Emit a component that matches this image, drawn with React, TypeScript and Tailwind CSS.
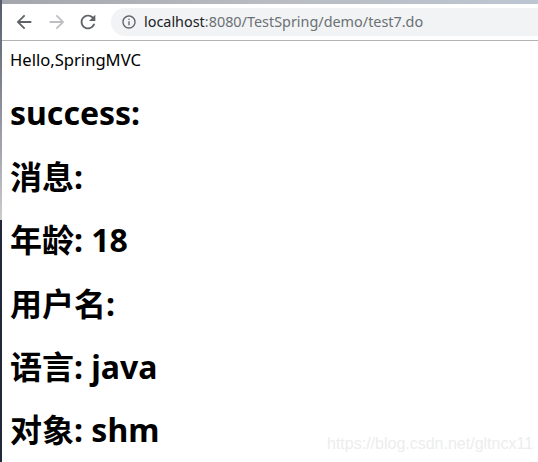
import React from "react";

const fields = ["success:", "消息:", "年龄: 18", "用户名:", "语言: java", "对象: shm"];

// Chrome toolbar glyphs
const Icon = ({ d, size, className }: { d: string; size: number; className: string }) => (
  <svg width={size} height={size} viewBox="0 0 24 24" fill="currentColor" className={className}>
    <path d={d} />
  </svg>
);

const BACK = "M20 11H7.83l5.59-5.59L12 4l-8 8 8 8 1.41-1.41L7.83 13H20v-2z";
const FORWARD = "M4 11h12.17l-5.59-5.59L12 4l8 8-8 8-1.41-1.41L16.17 13H4v-2z";
const RELOAD =
  "M17.65 6.35C16.2 4.9 14.21 4 12 4c-4.42 0-7.99 3.58-7.99 8s3.57 8 7.99 8c3.73 0 6.84-2.55 7.73-6h-2.08c-.82 2.33-3.04 4-5.65 4-3.31 0-6-2.69-6-6s2.69-6 6-6c1.66 0 3.14.69 4.22 1.78L13 11h7V4l-2.35 2.35z";
const INFO =
  "M11 7h2v2h-2zm0 4h2v6h-2zm1-9C6.48 2 2 6.48 2 12s4.48 10 10 10 10-4.48 10-10S17.52 2 12 2zm0 18c-4.41 0-8-3.59-8-8s3.59-8 8-8 8 3.59 8 8-3.59 8-8 8z";

const App = () => {
  return (
    <div className="relative flex h-[462px] w-[538px] overflow-hidden bg-white font-['Noto_Sans','Noto_Sans_CJK_SC',sans-serif] text-black">
      {/* sliver of the desktop behind the window */}
      <div className="flex w-[2px] shrink-0 flex-col">
        <div className="h-[220px] bg-gradient-to-b from-[#565c6c] to-[#cbcbcf]" />
        <div className="flex-1 bg-[#20283a]" />
      </div>
      <div className="min-w-0 flex-1">
        <div className="h-1 bg-gradient-to-r from-[#a3a6ad] via-[#b9bcc2] to-[#bcc6d2]" />
        <div className="flex h-[37px] items-center border-b border-[#b3b3b3]">
          <div className="flex items-center pl-[11px]">
            <Icon d={BACK} size={22} className="text-[#5f6368]" />
            <Icon d={FORWARD} size={22} className="ml-[11px] text-[#bdbfc2]" />
            <Icon d={RELOAD} size={22} className="ml-[9px] text-[#5f6368]" />
          </div>
          <div className="ml-[12px] flex h-[28px] flex-1 items-center rounded-l-full bg-[#f1f3f4] pl-[10px] text-[14.4px]">
            <Icon d={INFO} size={16} className="text-[#5f6368]" />
            <span className="ml-[7px] text-[#202124]">localhost</span>
            <span className="text-[#6b7075]">:8080/TestSpring/demo/test7.do</span>
          </div>
        </div>
        <div className="px-[8px]">
          <p className="mt-[8px] text-[16.6px] leading-[22px]">Hello,SpringMVC</p>
          {fields.map((f) => (
            <h1 key={f} className="mt-[20.4px] text-[32px] font-bold leading-[43px]">
              {f}
            </h1>
          ))}
        </div>
      </div>
      <span className="absolute left-[327px] top-[432px] font-['Liberation_Sans',sans-serif] text-[16px] text-[#ededed]">
        https://blog.csdn.net/gltncx11
      </span>
    </div>
  );
};

export default App;
